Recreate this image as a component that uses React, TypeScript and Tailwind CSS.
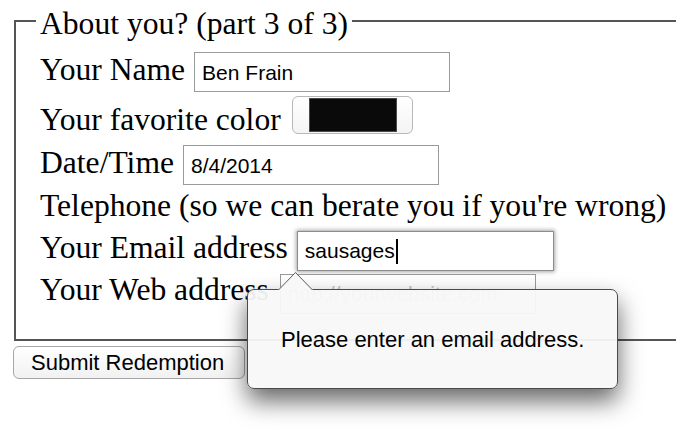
import React from "react";

const serif = "font-['Liberation_Serif','Times_New_Roman',serif]";
const sans = "font-['Liberation_Sans',Arial,sans-serif]";

function TextBox({ value, className = "" }: { value: string; className?: string }) {
  return (
    <div
      className={`self-start mt-[4px] h-[40px] w-[256px] border border-[#9a9a9a] bg-white flex items-center pl-[7px] text-[21px] text-black ${sans} ${className}`}
    >
      {value}
    </div>
  );
}

export default function App() {
  return (
    <div className="relative w-[676px] h-[430px] overflow-hidden bg-white text-black">
      <fieldset className="ml-[14px] w-[720px] border-2 border-[#555] pl-[24px] pt-[6px] pb-[28px]">
        <legend className={`px-[4px] pt-[6px] -ml-[4px] text-[31.6px] leading-[36px] ${serif}`}>
          About you? (part 3 of 3)
        </legend>

        <div className={`flex items-start gap-[9px] h-[43px] text-[31.6px] leading-[43px] ${serif}`}>
          <span>Your Name</span>
          <TextBox value="Ben Frain" />
        </div>

        <div className={`mt-[7px] flex items-start gap-[9px] h-[43px] text-[31.6px] leading-[43px] ${serif}`}>
          <span>Your favorite color</span>
          <div className="self-start -mt-[2px] ml-[2px] h-[38px] w-[121px] rounded-[6px] border border-[#b8b8b8] bg-gradient-to-b from-white to-[#f4f4f4] flex items-center pl-[16px]">
            <div className="h-[34px] w-[88px] border border-[#4a4a4a] bg-[#0a0a0a]" />
          </div>
        </div>

        <div className={`flex items-start gap-[9px] h-[43px] text-[31.6px] leading-[43px] ${serif}`}>
          <span>Date/Time</span>
          <TextBox value="8/4/2014" className="pl-[5px]" />
        </div>

        <div className={`flex items-start h-[43px] text-[31.6px] leading-[43px] whitespace-nowrap ${serif}`}>
          <span>Telephone (so we can berate you if you're wrong)</span>
        </div>

        <div className={`flex items-start gap-[9px] h-[42px] text-[31.6px] leading-[42px] ${serif}`}>
          <span>Your Email address</span>
          <div
            className={`self-start mt-[4px] h-[40px] w-[257px] border border-[#8c8c8c] bg-white shadow-[0_0_4px_1px_rgba(0,0,0,0.35)] flex items-center pl-[7px] text-[21px] text-black ${sans}`}
          >
            sausages
            <span className="ml-[1px] inline-block h-[25px] w-[2px] bg-black" />
          </div>
        </div>

        <div className={`flex items-start gap-[11px] h-[42px] text-[31.6px] leading-[42px] ${serif}`}>
          <span>Your Web address</span>
          <div
            className={`self-start mt-[5px] h-[40px] w-[256px] border border-[#9a9a9a] bg-white flex items-center pl-[7px] text-[21px] text-[#c4c4c4] ${sans}`}
          >
            http://yourwebsite.com
          </div>
        </div>
      </fieldset>

      <button
        className={`ml-[13px] mt-[5px] h-[33px] w-[232px] rounded-[6px] border border-[#a6a6a6] bg-gradient-to-b from-white to-[#f1f1f1] pl-[17px] text-left text-[22px] leading-none text-black ${sans}`}
      >
        Submit Redemption
      </button>

      {/* validation bubble */}
      <div className="absolute left-[247px] top-[289px] z-10">
        <svg
          className="absolute left-[31px] -top-[18px]"
          width="36"
          height="20"
          viewBox="0 0 36 20"
        >
          <path d="M0 19 L17.5 1 L35 19 Z" fill="#f8f8f8" />
          <path d="M0.5 19 L17.5 1.5 L34.5 19" fill="none" stroke="#5a5a5a" strokeWidth="1" />
        </svg>
        <div
          className={`h-[100px] w-[371px] rounded-[7px] border border-[#4a4a4a] bg-[#f8f8f8]/95 shadow-[0_12px_24px_rgba(0,0,0,0.6)] flex items-center pl-[33px] text-[22px] text-black ${sans}`}
        >
          Please enter an email address.
        </div>
      </div>
    </div>
  );
}
